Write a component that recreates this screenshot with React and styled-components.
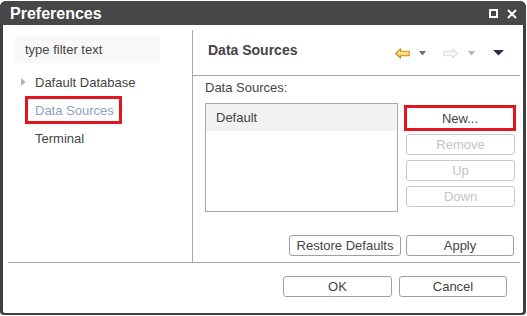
import React from "react";
import styled, { createGlobalStyle } from "styled-components";

const Global = createGlobalStyle`
  html, body { margin: 0; padding: 0; background: #ffffff; }
  body { font-family: "Liberation Sans", Arial, sans-serif; font-size: 13px; color: #444; }
  * { box-sizing: border-box; }
`;

const Dialog = styled.div`
  width: 526px;
  height: 314px;
  margin-top: 1px;
  background: #3f3f3f;
  border-radius: 6px 6px 4px 4px;
  padding: 0 3px 2px 3px;
  display: flex;
  flex-direction: column;
`;

const TitleBar = styled.div`
  height: 24px;
  display: flex;
  align-items: center;
  padding: 1px 9px 0 7px;
  background: #474747;
  margin: 0 -3px;
  padding-left: 10px;
  border-radius: 6px 6px 0 0;
`;

const Title = styled.div`
  flex: 1;
  color: #fff;
  font-weight: bold;
  font-size: 16px;
`;

const TitleIcons = styled.div`
  display: flex;
  gap: 9px;
  align-items: center;
`;

const Body = styled.div`
  flex: 1;
  background: #fff;
  border-radius: 0 0 2px 2px;
  display: flex;
  flex-direction: column;
`;

const Main = styled.div`
  display: flex;
  height: 232px;
  margin: 5px 3px 0 0;
`;

const LeftPanel = styled.div`
  width: 190px;
  border-right: 1px solid #a8a8a8;
  padding: 7px 0 0 12px;
  display: flex;
  flex-direction: column;
`;

const Filter = styled.div`
  width: 145px;
  height: 26px;
  line-height: 26px;
  background: #f8f8f8;
  padding-left: 10px;
  color: #444;
`;

const Tree = styled.div`
  margin-top: 5px;
  display: flex;
  flex-direction: column;
  align-items: flex-start;
`;

const TreeItem = styled.div`
  height: 28px;
  display: flex;
  align-items: center;
  color: ${(p) => (p.$selected ? "#8fa2bf" : "#444")};
  padding-left: ${(p) => (p.$selected ? "7px" : p.$arrow ? "6px" : "20px")};
  padding-right: ${(p) => (p.$selected ? "5px" : "0")};
  margin-left: ${(p) => (p.$selected ? "10px" : "0")};
  border: ${(p) => (p.$selected ? "3px solid #e2161f" : "none")};
`;

const Arrow = styled.svg`
  margin-right: 9px;
`;

const RightPanel = styled.div`
  flex: 1;
  display: flex;
  flex-direction: column;
`;

const Header = styled.div`
  height: 46px;
  border-bottom: 1px solid #a8a8a8;
  display: flex;
  align-items: flex-start;
  padding: 12px 0 0 15px;
`;

const HeaderTitle = styled.div`
  flex: 1;
  font-weight: bold;
  font-size: 14px;
  line-height: 16px;
  color: #444;
`;

const NavIcons = styled.div`
  display: flex;
  align-items: center;
  height: 22px;
  margin-right: 16px;
`;

const NavIcon = styled.svg`
  margin-left: ${(p) => p.$ml || 0}px;
`;

const Content = styled.div`
  padding: 0 4px 0 12px;
  display: flex;
  flex-direction: column;
`;

const Label = styled.div`
  margin-top: 4px;
  line-height: 16px;
  color: #444;
`;

const ListRow = styled.div`
  display: flex;
  margin-top: 7px;
`;

const List = styled.div`
  width: 193px;
  height: 109px;
  border: 1px solid #a9a9a9;
`;

const ListItem = styled.div`
  height: 27px;
  line-height: 27px;
  background: #f2f2f2;
  padding-left: 10px;
  color: #444;
`;

const ButtonCol = styled.div`
  display: flex;
  flex-direction: column;
  padding-top: 2px;
  margin-left: 6px;
`;

const Button = styled.div`
  width: ${(p) => p.$w || 109}px;
  height: ${(p) => (p.$highlight ? 26 : 21)}px;
  margin-top: ${(p) => p.$mt || 0}px;
  margin-left: ${(p) => p.$ml || 0}px;
  border: ${(p) => (p.$highlight ? "3px solid #e2161f" : `1px solid ${p.$disabled ? "#c8c8c8" : "#a0a0a0"}`)};
  border-radius: ${(p) => (p.$highlight ? "0" : "3px")};
  display: flex;
  align-items: center;
  justify-content: center;
  color: ${(p) => (p.$disabled ? "#c4c4c4" : "#444")};
  background: #fff;
`;

const ActionRow = styled.div`
  display: flex;
  justify-content: flex-end;
  gap: 5px;
  margin-top: 23px;
  padding-right: 2px;
`;

const Separator = styled.div`
  margin: 0 3px 0 5px;
  border-top: 1px solid #a8a8a8;
`;

const Footer = styled.div`
  display: flex;
  justify-content: flex-end;
  gap: 7px;
  margin-top: 13px;
  padding-right: 16px;
`;

const Tri = ({ color, ml }) => (
  <NavIcon $ml={ml} width="7" height="5" viewBox="0 0 7 5">
    <path d="M0 0 H7 L3.5 4.5 Z" fill={color} />
  </NavIcon>
);

export default function App() {
  return (
    <>
      <Global />
      <Dialog>
        <TitleBar>
          <Title>Preferences</Title>
          <TitleIcons>
            <svg width="9" height="9" viewBox="0 0 9 9">
              <rect x="1" y="1" width="7" height="7" fill="none" stroke="#fff" strokeWidth="2" />
            </svg>
            <svg width="10" height="10" viewBox="0 0 10 10">
              <path d="M1 1 L9 9 M9 1 L1 9" stroke="#fff" strokeWidth="2" />
            </svg>
          </TitleIcons>
        </TitleBar>
        <Body>
          <Main>
            <LeftPanel>
              <Filter>type filter text</Filter>
              <Tree>
                <TreeItem $arrow>
                  <Arrow width="5" height="8" viewBox="0 0 5 8">
                    <path d="M0 0 L4.5 4 L0 8 Z" fill="#b0b0b0" />
                  </Arrow>
                  Dafault Database
                </TreeItem>
                <TreeItem $selected>Data Sources</TreeItem>
                <TreeItem>Terminal</TreeItem>
              </Tree>
            </LeftPanel>
            <RightPanel>
              <Header>
                <HeaderTitle>Data Sources</HeaderTitle>
                <NavIcons>
                  <NavIcon width="15" height="11" viewBox="0 0 15 11">
                    <defs>
                      <linearGradient id="yl" x1="0" y1="0" x2="0" y2="1">
                        <stop offset="0" stopColor="#fff7c8" />
                        <stop offset="1" stopColor="#f3c850" />
                      </linearGradient>
                    </defs>
                    <path d="M0.8 5.5 L5.5 0.8 V3.3 H14.2 V7.7 H5.5 V10.2 Z" fill="url(#yl)" stroke="#c58a10" strokeWidth="1.1" strokeLinejoin="round" />
                  </NavIcon>
                  <Tri color="#6f6f6f" ml={9} />
                  <NavIcon $ml={17} width="15" height="11" viewBox="0 0 15 11">
                    <path d="M14.2 5.5 L9.5 0.8 V3.3 H0.8 V7.7 H9.5 V10.2 Z" fill="#f6f6f6" stroke="#dcdcdc" strokeWidth="1.1" strokeLinejoin="round" />
                  </NavIcon>
                  <Tri color="#b4b4b4" ml={10} />
                  <NavIcon $ml={18} width="11" height="6" viewBox="0 0 11 6">
                    <path d="M0 0 H11 L5.5 5.5 Z" fill="#2e2d4a" />
                  </NavIcon>
                </NavIcons>
              </Header>
              <Content>
                <Label>Data Sources:</Label>
                <ListRow>
                  <List>
                    <ListItem>Default</ListItem>
                  </List>
                  <ButtonCol>
                    <Button $highlight $w={112}>New...</Button>
                    <Button $disabled $mt={3} $ml={2}>Remove</Button>
                    <Button $disabled $mt={5} $ml={2}>Up</Button>
                    <Button $disabled $mt={5} $ml={2}>Down</Button>
                  </ButtonCol>
                </ListRow>
                <ActionRow>
                  <Button $w={112}>Restore Defaults</Button>
                  <Button $w={108}>Apply</Button>
                </ActionRow>
              </Content>
            </RightPanel>
          </Main>
          <Separator />
          <Footer>
            <Button $w={109}>OK</Button>
            <Button $w={108}>Cancel</Button>
          </Footer>
        </Body>
      </Dialog>
    </>
  );
}
